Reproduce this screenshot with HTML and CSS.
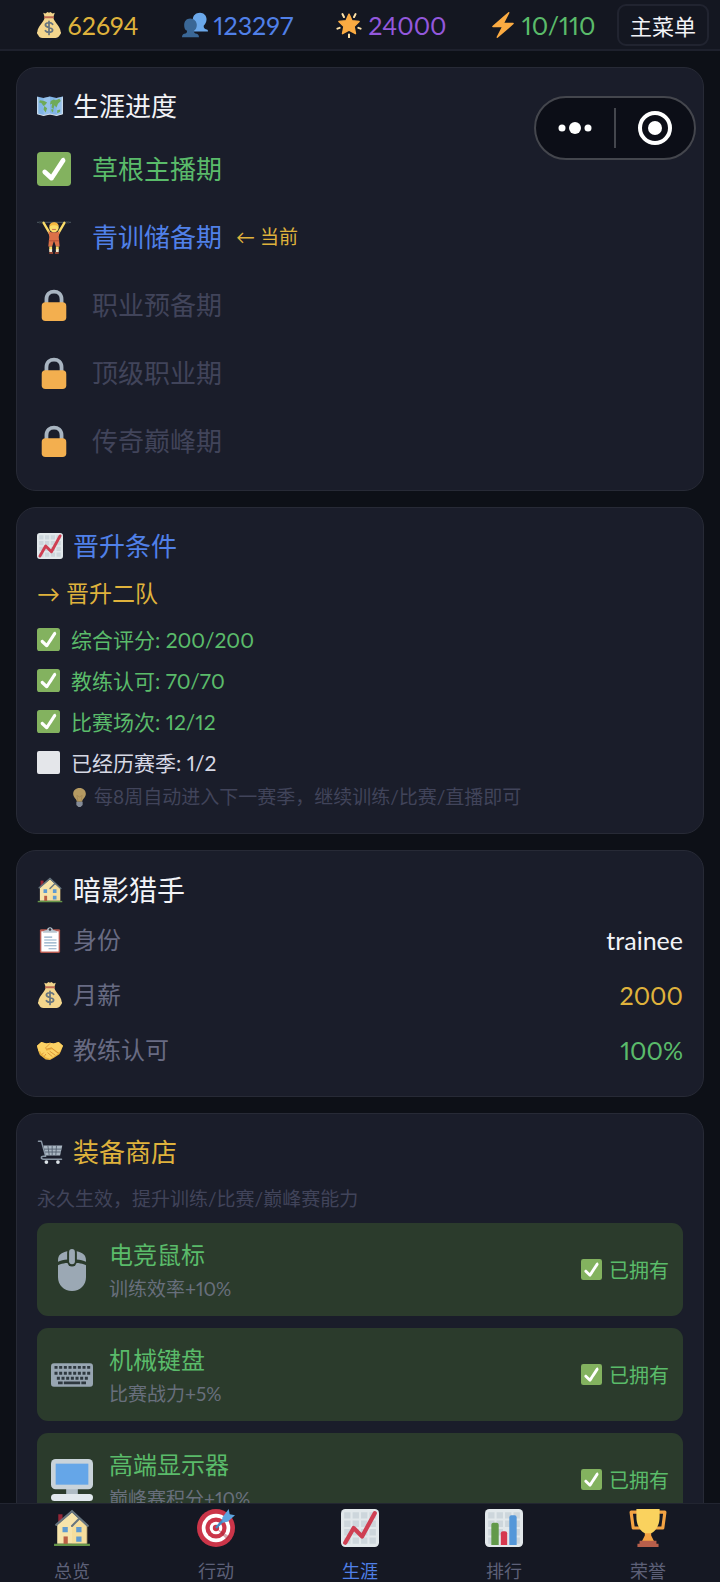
FILE: index.html
```html
<!DOCTYPE html>
<html lang="zh-CN">
<head>
  <meta charset="UTF-8">
  <title>生涯</title>
  <meta name="viewport" content="width=device-width, initial-scale=1.0">
  <link rel="stylesheet" href="styles.css">
</head>
<body>
  <!-- иконки -->
  <svg class="sprite" aria-hidden="true">
    <symbol id="i-check" viewBox="0 0 36 36">
      <rect width="36" height="36" rx="4" fill="#83b25f"/>
      <path fill="#fff" d="M29.28 6.362c-1.156-.751-2.704-.422-3.458.736L14.936 23.877l-5.029-4.65c-1.014-.938-2.596-.875-3.533.138-.937 1.014-.875 2.596.139 3.533l7.209 6.666c.48.445 1.09.665 1.696.665.673 0 1.534-.282 2.099-1.139.332-.506 12.209-18.81 12.209-18.81.752-1.157.424-2.704-.734-3.457z"/>
    </symbol>
    <symbol id="i-empty" viewBox="0 0 36 36">
      <rect width="36" height="36" rx="3" fill="#e4e6ea"/>
    </symbol>
    <symbol id="i-money" viewBox="0 0 36 36">
      <path fill="#f3d68d" d="M12 8h12c1 4 3 6 6 10 2 3 4 6 4 9 1 1 1 3-1 5-1 3-4 4-6 4H9c-3 0-5-1-6-4-2-2-2-4-1-5 0-3 2-6 4-9 3-4 5-6 6-10z"/>
      <path fill="#f3d68d" d="M10 1l3 1 3-2 2 1 2-1 3 2 3-1-2 6H12z"/>
      <rect x="11" y="6" width="14" height="2.600" rx="1.300" fill="#bf6952"/>
      <path d="M23 17c-2-3-10-3-10 1s10 3 10 7-8 4-10 1M18 13v18" fill="none" stroke="#67757f" stroke-width="2.400" stroke-linecap="round"/>
    </symbol>
    <symbol id="i-users" viewBox="0 0 36 36">
      <path fill="#6ba8ea" d="M25 1c5 0 9 4 9 9 0 4-2 7-4 9 0 3 1 4 3 5 2 0 3 1 3 3H15V10c0-5 4-9 10-9z"/>
      <path fill="#3a6796" d="M11.500 9c5 0 9 4 9 9 0 4-2 7-4 8 0 3 1 4 4 4 2 1 3 2 3 5H0c0-3 1-4 3-5 3 0 4-1 4-4-3-1-4-4-4-8 0-5 3-9 8.500-9z"/>
    </symbol>
    <symbol id="i-star" viewBox="0 0 36 36">
      <path fill="#fbab42" stroke="#fbab42" stroke-width="2" stroke-linejoin="round" d="M18 3l4 9 10 1-7 7 2 10-9-5-9 5 2-10-7-7 10-1z"/>
      <g stroke="#ffe3a8" stroke-width="2.800" stroke-linecap="round">
        <path d="M9 3l2 4M27 3l-2 4M2 23l3-1M34 23l-3-1M18 31v4"/>
      </g>
    </symbol>
    <symbol id="i-zap" viewBox="0 0 36 36">
      <path fill="#fbab42" d="M32.938 15.651C32.792 15.260 32.418 15 32 15H19.925L26.890 1.458c.219-.426.106-.947-.271-1.243C26.437.071 26.218 0 26 0c-.233 0-.466.082-.653.243L18 6.588 3.347 19.243c-.316.273-.430.714-.284 1.105S3.582 21 4 21h12.075L9.110 34.542c-.219.426-.106.947.271 1.243.182.144.401.215.619.215.233 0 .466-.082.653-.243L18 29.412l14.653-12.655c.317-.273.430-.714.285-1.106z"/>
    </symbol>
    <symbol id="i-map" viewBox="0 0 36 36">
      <path fill="#82b5e6" d="M0 5l9 2 9-2 9 2 9-2v24l-9 2-9-2-9 2-9-2z"/>
      <path fill="#a9cdf0" d="M9 7l9-2v24l-9 2zM27 7l9-2v24l-9 2z" opacity=".5"/>
      <path fill="#6faa58" d="M4 10l6 1 4 2-3 4-2 1-3-4-3-1zM10 18l4 3-2 6-3-4zM19 11l4-2 3 1 5-2 2 3-4 4-2 5-3-3-1 5-3-2 1-5-3 1zM28 24l4-1v3l-4 2zM20 22l3 1-1 4-2-2z"/>
      <path fill="none" stroke="#d8e2ea" stroke-width="1.400" d="M1 6v23l8 2 9-2 9 2 8-2V6"/>
    </symbol>
    <symbol id="i-lifter" viewBox="0 0 36 36">
      <path d="M0 2.500h36" stroke="#424c55" stroke-width="1.300"/>
      <path d="M3 1v3M5 1v3M31 1v3M33 1v3" stroke="#2e363e" stroke-width="1.500"/>
      <path d="M7 3l7 12M29 3l-7 12" stroke="#fadc69" stroke-width="2.500" stroke-linecap="round"/>
      <path fill="#dc7148" d="M12 12l3 1h6l3-1-1 6 1 10h-4l-2-6-2 6h-4l1-10z"/>
      <path d="M12.500 22h11" stroke="#b9533a" stroke-width="1.200"/>
      <path d="M14.500 28v4M21.500 28v4" stroke="#fadc69" stroke-width="3"/>
      <path d="M14.500 31v3M21.500 31v3" stroke="#f2ead0" stroke-width="3"/>
      <path d="M13 35h4M19 35h4" stroke="#b95337" stroke-width="1.500"/>
      <circle cx="18" cy="8" r="5" fill="#fadc69"/>
      <path fill="#f5b73f" d="M13 7c0-6 10-6 10 0-3-2-7-2-10 0z"/>
      <path d="M16 10h4" stroke="#c1694f"/>
    </symbol>
    <symbol id="i-lock" viewBox="0 0 36 36">
      <path fill="none" stroke="#a9b5c1" stroke-width="4" d="M10 17v-5c0-11 16-11 16 0v5"/>
      <rect x="5" y="15" width="26" height="20" rx="4" fill="#f3af4f"/>
    </symbol>
    <symbol id="i-chart" viewBox="0 0 36 36">
      <rect width="36" height="36" rx="4" fill="#e2e8eb"/>
      <path fill="#cdd6dc" d="M3 3h6v6H3zM11 3h6v6h-6zM19 3h6v6h-6zM27 3h6v6h-6zM3 11h6v6H3zM11 11h6v6h-6zM19 11h6v6h-6zM27 11h6v6h-6zM3 19h6v6H3zM11 19h6v6h-6zM19 19h6v6h-6zM27 19h6v6h-6zM3 27h6v6H3zM11 27h6v6h-6zM19 27h6v6h-6zM27 27h6v6h-6z"/>
      <path fill="none" stroke="#cf3f52" stroke-width="4" stroke-linecap="round" stroke-linejoin="round" d="M4 32l8-14 8 8L32 4"/>
    </symbol>
    <symbol id="i-bars" viewBox="0 0 36 36">
      <rect width="36" height="36" rx="4" fill="#e2e8eb"/>
      <path fill="#cdd6dc" d="M3 3h6v6H3zM11 3h6v6h-6zM19 3h6v6h-6zM27 3h6v6h-6zM3 11h6v6H3zM11 11h6v6h-6zM19 11h6v6h-6zM27 11h6v6h-6zM3 19h6v6H3zM11 19h6v6h-6zM27 19h6v6h-6zM3 27h6v6H3zM27 27h6v6h-6z"/>
      <path fill="#62994a" d="M6 34V15q0-2 2-2h3q2 0 2 2v19z"/>
      <path fill="#d6384e" d="M15 34V23q0-2 2-2h2q2 0 2 2v11z"/>
      <path fill="#5497d9" d="M23 34V8q0-2 2-2h3q2 0 2 2v26z"/>
    </symbol>
    <symbol id="i-bulb" viewBox="0 0 36 36">
      <path fill="#b59a62" d="M18 0c7 0 12 5 12 11 0 7-6 9-7 15H13c-1-6-7-8-7-15C6 5 11 0 18 0z"/>
      <path fill="none" stroke="#9c8150" stroke-width="1.200" d="M15 25l-2-11 5 3 5-3-2 11"/>
      <path fill="#858c98" d="M12 26h12v6l-4 4h-4l-4-4z"/>
    </symbol>
    <symbol id="i-house" viewBox="0 0 36 36">
      <path fill="#962636" d="M5 5h4v10H5z"/>
      <path fill="#f7e4ab" d="M18 3l14 13v17H4V15z"/>
      <path fill="#f2d27e" d="M18 15l6-6 9 8v16H18z" opacity=".3"/>
      <path fill="none" stroke="#67757f" stroke-width="2" stroke-linecap="round" d="M3 15L18 2l15 14M18 16l7-7"/>
      <path fill="#5f9bd1" d="M9 17h5v5H9zM22 17h5v5h-5zM22 26h5v5h-5z"/>
      <path fill="#bb5f45" d="M10 26h4v8h-4z"/>
      <path fill="#68974a" d="M1 33h34v2H1z"/>
    </symbol>
    <symbol id="i-clip" viewBox="0 0 36 36">
      <rect x="4" y="3" width="28" height="33" rx="2" fill="#b7594f"/>
      <path fill="#fff" d="M6 6h24v28H6z"/>
      <path d="M10 14h11M10 18h17M10 22h17M10 26h17M16 30h11" stroke="#8aa9c4" stroke-width="1.500"/>
      <path fill="#b9c6d0" d="M8 8c0-3 3-4 6-4 0-5 8-5 8 0 3 0 6 1 6 4z"/>
      <circle cx="18" cy="3.500" r="1.800" fill="#303642"/>
    </symbol>
    <symbol id="i-hands" viewBox="0 0 36 36">
      <path fill="#ebb440" d="M0 12l6-5 7 2 5-1 5 1 7-2 6 5-3 8-2 4-8 5-5 3-6-1-8-6-2-5z"/>
      <path fill="#fbd164" d="M0 12l6-5 7 2 5-1 5 1 7-2 6 5-4 8-3 1-9-6-4 1-5 2-1-2 4-4-9 8-3-1z"/>
      <path fill="#fbd164" d="M4 18l6-3 3 4 8-2 8 6-7 5-4 2-6-2-6-5z"/>
      <path fill="none" stroke="#d88d33" stroke-width="1.200" stroke-linecap="round" stroke-linejoin="round" d="M18 9l-6 6 1 2 7-2 9 7M18 20l7 5M15 22l6 5M9 22l-2 2M12 24l-2 3"/>
    </symbol>
    <symbol id="i-cart" viewBox="0 0 36 36">
      <path fill="none" stroke="#8996a4" stroke-width="2" stroke-linecap="round" stroke-linejoin="round" d="M2 3h4l6 21H9q-3 0-3 2t3 2h25"/>
      <path fill="#a9b6c2" d="M9 9h26l-3 14H12z"/>
      <path fill="none" stroke="#525e6d" stroke-width="1.200" d="M10 14h24M11 18h22M15 9l2 14M21 9v14M27 9l-1 14"/>
      <circle cx="13" cy="32" r="2.600" fill="#dce3e8"/>
      <circle cx="29" cy="32" r="2.600" fill="#dce3e8"/>
    </symbol>
    <symbol id="i-mouse" viewBox="0 0 36 36">
      <path fill="#9ba8b4" d="M6 14c4-3 20-3 24 0v10c0 7-5 12-12 12S6 31 6 24z"/>
      <path fill="#9ba8b4" d="M6 10c0-5 3-7 8-8v7c-3 0-6 1-8 2zM30 10c0-5-3-7-8-8v7c3 0 6 1 8 2z"/>
      <rect x="14" y="0" width="8" height="15" rx="4" fill="#2b3b2c"/>
      <rect x="15.500" y="0" width="5" height="13" rx="2.500" fill="#9ba8b4"/>
    </symbol>
    <symbol id="i-keyboard" viewBox="0 0 36 36">
      <rect y="8" width="36" height="20" rx="2.500" fill="#98a6b2"/>
      <g stroke="#2f3940" stroke-width="2.400">
        <path d="M3 11.500h31" stroke-dasharray="2.600 1.400"/>
        <path d="M3 16.500h31" stroke-dasharray="2.600 1.400"/>
        <path d="M5 20.800h27" stroke-dasharray="2.600 1.400"/>
        <path d="M6 24.800h4M11 24.800h14M26 24.800h4"/>
      </g>
    </symbol>
    <symbol id="i-screen" viewBox="0 0 36 36">
      <path fill="#aebbc4" d="M13 25h10v6H13z"/>
      <rect width="36" height="26" rx="4" fill="#c9d3da"/>
      <rect x="4" y="4" width="28" height="18" fill="#65a6e8"/>
      <rect y="30" width="36" height="6" rx="3" fill="#e1e8ed"/>
    </symbol>
    <symbol id="i-target" viewBox="0 0 36 36">
      <circle cx="18" cy="18" r="18" fill="#cb3549"/>
      <circle cx="18" cy="18" r="13.500" fill="#fff"/>
      <circle cx="18" cy="18" r="10" fill="#cb3549"/>
      <circle cx="18" cy="18" r="6" fill="#fff"/>
      <circle cx="18" cy="18" r="3" fill="#cb3549"/>
      <path fill="#9d2636" d="M18 18l10 11 3-3z" opacity=".4"/>
      <path d="M18 18L30 5" stroke="#4289c1" stroke-width="2.400"/>
      <path fill="#5da4df" d="M24 8l6-8 1 5 5 1-7 6-5 1z"/>
    </symbol>
    <symbol id="i-trophy" viewBox="0 0 36 36">
      <path fill="none" stroke="#f3a343" stroke-width="3" stroke-linejoin="round" d="M9 3H2l2 15h10M27 3h7l-2 15H22"/>
      <path fill="#f3a343" d="M15 22h6v3l3 6H12l3-6z"/>
      <path fill="#fad25e" d="M7 0h22v7c0 9-4 14-8 16h-6C11 21 7 16 7 7z"/>
      <path fill="#b85f4b" d="M10 30h16v3h2v3H8v-3h2z"/>
    </symbol>
  </svg>

  <header class="topbar">
    <div class="stats">
      <span class="stat gold"><svg class="icon"><use href="#i-money"/></svg>62694</span>
      <span class="stat blue"><svg class="icon"><use href="#i-users"/></svg>123297</span>
      <span class="stat purple"><svg class="icon"><use href="#i-star"/></svg>24000</span>
      <span class="stat green"><svg class="icon"><use href="#i-zap"/></svg>10/110</span>
    </div>
    <button class="menu-btn" type="button">主菜单</button>
  </header>

  <div class="capsule">
    <button type="button" aria-label="更多">
      <svg width="36" height="36" viewBox="0 0 36 36" fill="#fff"><circle cx="5" cy="18" r="3.500"/><circle cx="18" cy="18" r="6"/><circle cx="31" cy="18" r="3.500"/></svg>
    </button>
    <button type="button" aria-label="关闭">
      <svg width="36" height="36" viewBox="0 0 36 36"><circle cx="18" cy="18" r="15" fill="none" stroke="#fff" stroke-width="4"/><circle cx="18" cy="18" r="7" fill="#fff"/></svg>
    </button>
  </div>

  <main class="page">
    <section class="card">
      <h2 class="title"><svg class="icon"><use href="#i-map"/></svg>生涯进度</h2>
      <ul class="stages">
        <li class="stage green"><svg class="icon"><use href="#i-check"/></svg>草根主播期</li>
        <li class="stage blue"><svg class="icon"><use href="#i-lifter"/></svg>青训储备期<span class="now">← 当前</span></li>
        <li class="stage dim"><svg class="icon"><use href="#i-lock"/></svg>职业预备期</li>
        <li class="stage dim"><svg class="icon"><use href="#i-lock"/></svg>顶级职业期</li>
        <li class="stage dim"><svg class="icon"><use href="#i-lock"/></svg>传奇巅峰期</li>
      </ul>
    </section>

    <section class="card">
      <h2 class="title blue"><svg class="icon"><use href="#i-chart"/></svg>晋升条件</h2>
      <p class="goal">→ 晋升二队</p>
      <ul class="conds">
        <li class="cond green"><svg class="icon"><use href="#i-check"/></svg>综合评分: 200/200</li>
        <li class="cond green"><svg class="icon"><use href="#i-check"/></svg>教练认可: 70/70</li>
        <li class="cond green"><svg class="icon"><use href="#i-check"/></svg>比赛场次: 12/12</li>
        <li class="cond"><svg class="icon"><use href="#i-empty"/></svg>已经历赛季: 1/2</li>
      </ul>
      <p class="hint"><svg class="icon"><use href="#i-bulb"/></svg>每8周自动进入下一赛季，继续训练/比赛/直播即可</p>
    </section>

    <section class="card">
      <h2 class="title team"><svg class="icon"><use href="#i-house"/></svg>暗影猎手</h2>
      <dl class="info">
        <div class="row"><dt><svg class="icon"><use href="#i-clip"/></svg>身份</dt><dd>trainee</dd></div>
        <div class="row"><dt><svg class="icon"><use href="#i-money"/></svg>月薪</dt><dd class="gold">2000</dd></div>
        <div class="row"><dt><svg class="icon"><use href="#i-hands"/></svg>教练认可</dt><dd class="green">100%</dd></div>
      </dl>
    </section>

    <section class="card">
      <h2 class="title gold"><svg class="icon"><use href="#i-cart"/></svg>装备商店</h2>
      <p class="note">永久生效，提升训练/比赛/巅峰赛能力</p>
      <ul class="shop">
        <li class="item">
          <svg class="icon"><use href="#i-mouse"/></svg>
          <div class="item-text"><h3>电竞鼠标</h3><p>训练效率+10%</p></div>
          <span class="owned"><svg class="icon"><use href="#i-check"/></svg>已拥有</span>
        </li>
        <li class="item">
          <svg class="icon"><use href="#i-keyboard"/></svg>
          <div class="item-text"><h3>机械键盘</h3><p>比赛战力+5%</p></div>
          <span class="owned"><svg class="icon"><use href="#i-check"/></svg>已拥有</span>
        </li>
        <li class="item">
          <svg class="icon"><use href="#i-screen"/></svg>
          <div class="item-text"><h3>高端显示器</h3><p>巅峰赛积分+10%</p></div>
          <span class="owned"><svg class="icon"><use href="#i-check"/></svg>已拥有</span>
        </li>
      </ul>
    </section>
  </main>

  <nav class="tabs">
    <a class="tab" href="#"><svg class="icon"><use href="#i-house"/></svg>总览</a>
    <a class="tab" href="#"><svg class="icon"><use href="#i-target"/></svg>行动</a>
    <a class="tab active" href="#"><svg class="icon"><use href="#i-chart"/></svg>生涯</a>
    <a class="tab" href="#"><svg class="icon"><use href="#i-bars"/></svg>排行</a>
    <a class="tab" href="#"><svg class="icon"><use href="#i-trophy"/></svg>荣誉</a>
  </nav>
</body>
</html>
```
FILE: styles.css
```css
* { box-sizing: border-box; margin: 0; padding: 0; }
body {
  display: flex; flex-direction: column; height: 100vh; overflow: hidden;
  background: #0d1017; color: #f2f3f7;
  font-family: Lato, "Noto Sans CJK SC", sans-serif; font-size: 26px; line-height: 36px;
  font-variant-numeric: proportional-nums;
}
ul { list-style: none; }
h2, h3 { font-weight: normal; }
button { font-family: inherit; cursor: pointer; }
.sprite { position: absolute; width: 0; height: 0; }
.icon { width: 26px; height: 26px; flex: none; }

.gold { color: #dfb23c; }
.blue { color: #5080e8; }
.purple { color: #9358dc; }
.green { color: #5abb6a; }
.dim { color: #41445a; }

/* верхняя панель */
.topbar {
  display: flex; align-items: center; height: 51px; flex: none;
  padding: 0 11px 0 14px; background: #141721; border-bottom: 2px solid #1e212d;
}
.stats { display: flex; flex: 1; justify-content: space-around; }
.stat { display: flex; align-items: center; gap: 6px; font-size: 25px; }
.menu-btn {
  width: 92px; height: 42px; border: 2px solid #212430; border-radius: 9px;
  background: #141721; color: #f2f3f7; font-size: 22px;
}

/* кнопки мини-приложения */
.capsule {
  position: fixed; top: 96px; right: 24px; z-index: 2;
  display: flex; align-items: center; width: 162px; height: 64px;
  background: #0c0e17; border: 2px solid #44464d; border-radius: 32px;
}
.capsule button {
  display: flex; flex: 1; align-items: center; justify-content: center;
  height: 40px; background: none; border: none;
}
.capsule button + button { border-left: 2px solid #44464d; }

.page {
  flex: 1; min-height: 0; overflow-y: auto; scrollbar-width: none;
  padding: 16px;
}
.card {
  padding: 20px 20px 22px; margin-bottom: 16px;
  background: #1a1d2a; border: 1px solid #272a36; border-radius: 20px;
}
.title { display: flex; align-items: center; gap: 10px; font-size: 26px; }
.team { font-size: 28px; line-height: 38px; }

.stages { display: flex; flex-direction: column; gap: 14px; margin-top: 18px; }
.stage { display: flex; align-items: center; height: 54px; }
.stage .icon { width: 34px; height: 34px; margin-right: 21px; }
.now { margin-left: 14px; color: #dfb23c; font-size: 19px; }

.goal { margin: 14px 0 11px; color: #dfb23c; font-size: 23px; line-height: 30px; }
.cond { display: flex; align-items: center; gap: 11px; height: 41px; font-size: 21px; }
.cond .icon { width: 23px; height: 23px; }
.cond:not(.green) { color: #d6d8e4; }
.hint {
  display: flex; align-items: center; gap: 5px; padding-left: 33px;
  color: #41445a; font-size: 19px; line-height: 28px;
}
.hint .icon { width: 19px; height: 19px; }

.info { display: flex; flex-direction: column; gap: 7px; margin-top: 7px; }
.row { display: flex; align-items: center; justify-content: space-between; height: 48px; }
.row dt { display: flex; align-items: center; gap: 10px; color: #686b83; font-size: 24px; }
.row dd { font-size: 25px; }

.note { margin: 15px 0 10px; color: #41445a; font-size: 19px; line-height: 28px; }
.shop { display: flex; flex-direction: column; gap: 12px; }
.item {
  display: flex; align-items: center; gap: 16px; height: 93px; padding: 0 14px;
  background: #2b3b2c; border-radius: 11px;
}
.item > .icon { width: 42px; height: 42px; }
.item-text { flex: 1; }
.item h3 { color: #5abb6a; font-size: 24px; }
.item p { margin-top: 2px; color: #686f7c; font-size: 19px; line-height: 28px; }
.owned { display: flex; align-items: center; gap: 7px; color: #5abb6a; font-size: 20px; }
.owned .icon { width: 21px; height: 21px; }

/* нижнее меню */
.tabs {
  display: flex; flex: none; height: 79px; padding-top: 5px;
  background: #151823; border-top: 1px solid #222531;
}
.tab {
  display: flex; flex: 1; flex-direction: column; align-items: center; gap: 13px;
  color: #5d6078; font-size: 18px; line-height: 22px; text-decoration: none;
}
.tab .icon { width: 38px; height: 38px; }
.tab.active { color: #5080e8; }
```
